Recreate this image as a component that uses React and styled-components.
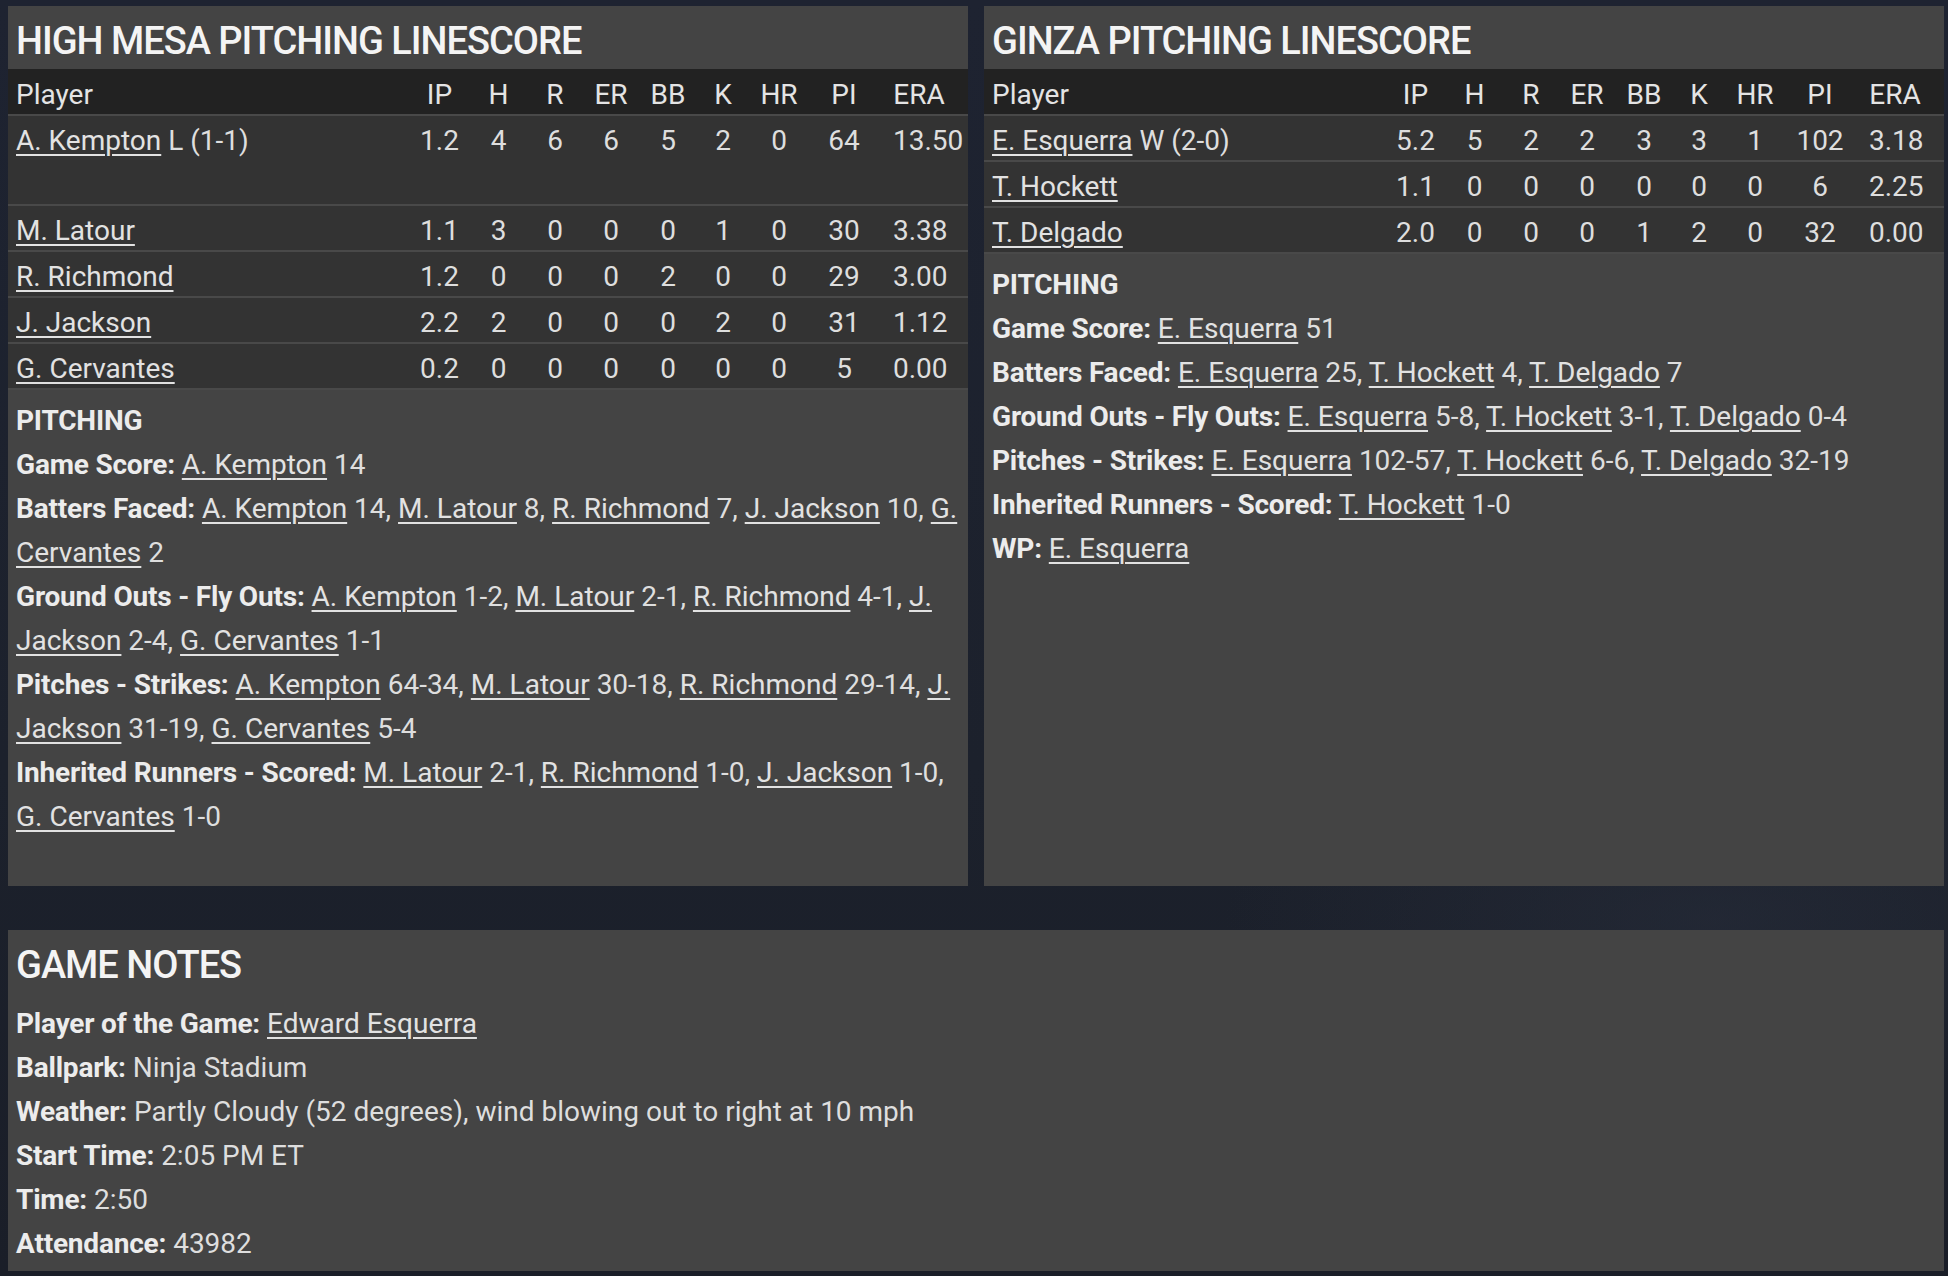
import React from 'react';
import styled, { createGlobalStyle } from 'styled-components';

const COLS = '1fr 61px 57px 56px 56px 58px 52px 60px 70px 66px';
const HEAD = ['IP', 'H', 'R', 'ER', 'BB', 'K', 'HR', 'PI', 'ERA'];

const teams = [
    {
        title: 'HIGH MESA PITCHING LINESCORE',
        pitchers: [
            { name: 'A. Kempton', dec: 'L (1-1)', tall: true, line: ['1.2', '4', '6', '6', '5', '2', '0', '64', '13.50'] },
            { name: 'M. Latour', line: ['1.1', '3', '0', '0', '0', '1', '0', '30', '3.38'] },
            { name: 'R. Richmond', line: ['1.2', '0', '0', '0', '2', '0', '0', '29', '3.00'] },
            { name: 'J. Jackson', line: ['2.2', '2', '0', '0', '0', '2', '0', '31', '1.12'] },
            { name: 'G. Cervantes', line: ['0.2', '0', '0', '0', '0', '0', '0', '5', '0.00'] },
        ],
        notes: [
            ['Game Score:', '[A. Kempton] 14'],
            ['Batters Faced:', '[A. Kempton] 14, [M. Latour] 8, [R. Richmond] 7, [J. Jackson] 10, [G.|Cervantes] 2'],
            ['Ground Outs - Fly Outs:', '[A. Kempton] 1-2, [M. Latour] 2-1, [R. Richmond] 4-1, [J.|Jackson] 2-4, [G. Cervantes] 1-1'],
            ['Pitches - Strikes:', '[A. Kempton] 64-34, [M. Latour] 30-18, [R. Richmond] 29-14, [J.|Jackson] 31-19, [G. Cervantes] 5-4'],
            ['Inherited Runners - Scored:', '[M. Latour] 2-1, [R. Richmond] 1-0, [J. Jackson] 1-0,|[G. Cervantes] 1-0'],
        ],
    },
    {
        title: 'GINZA PITCHING LINESCORE',
        pitchers: [
            { name: 'E. Esquerra', dec: 'W (2-0)', line: ['5.2', '5', '2', '2', '3', '3', '1', '102', '3.18'] },
            { name: 'T. Hockett', line: ['1.1', '0', '0', '0', '0', '0', '0', '6', '2.25'] },
            { name: 'T. Delgado', line: ['2.0', '0', '0', '0', '1', '2', '0', '32', '0.00'] },
        ],
        notes: [
            ['Game Score:', '[E. Esquerra] 51'],
            ['Batters Faced:', '[E. Esquerra] 25, [T. Hockett] 4, [T. Delgado] 7'],
            ['Ground Outs - Fly Outs:', '[E. Esquerra] 5-8, [T. Hockett] 3-1, [T. Delgado] 0-4'],
            ['Pitches - Strikes:', '[E. Esquerra] 102-57, [T. Hockett] 6-6, [T. Delgado] 32-19'],
            ['Inherited Runners - Scored:', '[T. Hockett] 1-0'],
            ['WP:', '[E. Esquerra]'],
        ],
    },
];

const gameNotes = [
    ['Player of the Game:', '[Edward Esquerra]'],
    ['Ballpark:', 'Ninja Stadium'],
    ['Weather:', 'Partly Cloudy (52 degrees), wind blowing out to right at 10 mph'],
    ['Start Time:', '2:05 PM ET'],
    ['Time:', '2:50'],
    ['Attendance:', '43982'],
];

// "[name]" becomes a link, "|" is a forced line break
const withBreaks = (str, key) =>
    str.split('|').map((s, i) => (
        <React.Fragment key={key + '-' + i}>
            {i > 0 && <br />}
            {s}
        </React.Fragment>
    ));

function Rich({ text }) {
    return text.split(/(\[[^\]]*\])/).filter(Boolean).map((tok, i) =>
        tok.startsWith('[')
            ? <Link key={i}>{withBreaks(tok.slice(1, -1), i)}</Link>
            : <React.Fragment key={i}>{withBreaks(tok, i)}</React.Fragment>
    );
}

function NoteLine({ label, value }) {
    return (
        <Line>
            <Label>{label}</Label> <Rich text={value} />
        </Line>
    );
}

function Linescore({ team }) {
    return (
        <Panel>
            <Title>{team.title}</Title>
            <HeadRow>
                <PlayerCell>Player</PlayerCell>
                {HEAD.map(h => <Cell key={h}>{h}</Cell>)}
            </HeadRow>
            {team.pitchers.map(p => (
                <Row key={p.name} $tall={p.tall}>
                    <PlayerCell>
                        <Link>{p.name}</Link>{p.dec && ' ' + p.dec}
                    </PlayerCell>
                    {p.line.map((v, i) => <Cell key={i}>{v}</Cell>)}
                </Row>
            ))}
            <Notes>
                <Line><Label>PITCHING</Label></Line>
                {team.notes.map(([l, v]) => <NoteLine key={l} label={l} value={v} />)}
            </Notes>
        </Panel>
    );
}

export default function App() {
    return (
        <>
            <GlobalStyle />
            <Page>
                <TopRow>
                    {teams.map(t => <Linescore key={t.title} team={t} />)}
                </TopRow>
                <Panel>
                    <Title>GAME NOTES</Title>
                    <Notes $bottom={5}>
                        {gameNotes.map(([l, v]) => <NoteLine key={l} label={l} value={v} />)}
                    </Notes>
                </Panel>
            </Page>
        </>
    );
}

const GlobalStyle = createGlobalStyle`
    html, body {
        margin: 0;
        padding: 0;
    }
    body {
        font-family: Roboto, "Liberation Sans", sans-serif;
        font-size: 28px;
        color: #dedede;
        background:
            radial-gradient(ellipse 700px 260px at 88% 72%, rgba(40, 46, 60, 0.55), transparent 70%),
            linear-gradient(180deg, #1e2331 0%, #1c212c 60%, #1a1e28 100%);
        min-height: 1276px;
    }
`;

const Page = styled.div`
    box-sizing: border-box;
    width: 1948px;
    padding: 6px 4px 6px 8px;
    display: flex;
    flex-direction: column;
    gap: 44px;
`;

const TopRow = styled.div`
    display: grid;
    grid-template-columns: 1fr 1fr;
    gap: 16px;
`;

const Panel = styled.section`
    background: #444444;
    ${TopRow} & {
        min-height: 880px;
    }
`;

const Title = styled.h2`
    margin: 0;
    height: 63px;
    box-sizing: border-box;
    padding: 8px 8px 0;
    line-height: 55px;
    font-size: 38px;
    font-weight: 500;
    letter-spacing: -1px;
    color: #f4f4f4;
    white-space: nowrap;
`;

const Row = styled.div`
    display: grid;
    grid-template-columns: ${COLS};
    box-sizing: border-box;
    height: ${p => (p.$tall ? 90 : 46)}px;
    padding: 3px 23px 0 8px;
    line-height: 44px;
    background: #333333;
    border-bottom: 2px solid #494949;
`;

const HeadRow = styled(Row)`
    height: 47px;
    padding-top: 4px;
    background: #222222;
    color: #e4e4e4;
`;

/* the ERA track is narrow: a wide value like 13.50 overflows to the right */
const Cell = styled.div`
    min-width: 0;
    text-align: center;
    white-space: nowrap;
    &:last-child {
        padding-left: 14px;
    }
`;

const PlayerCell = styled.div`
    white-space: nowrap;
`;

const Link = styled.span`
    color: #e2e2e2;
    text-decoration: underline;
    text-decoration-thickness: 2px;
    text-underline-offset: 4px;
    cursor: pointer;
`;

const Notes = styled.div`
    padding: 9px 8px ${p => p.$bottom || 0}px;
`;

const Line = styled.div`
    line-height: 44px;
    white-space: nowrap;
`;

const Label = styled.span`
    font-weight: 700;
    letter-spacing: -0.2px;
    color: #ececec;
`;
